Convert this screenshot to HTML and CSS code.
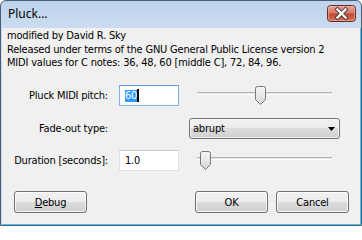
FILE: index.html
```html
<!DOCTYPE html>
<html>
<head>
<meta charset="utf-8">
<link rel="stylesheet" href="styles.css">
</head>
<body>
<div class="window">
  <div class="titlebar">
    <span class="title">Pluck...</span>
    <div class="close">
      <svg width="29" height="17" viewBox="0 0 29 17">
        <defs>
          <linearGradient id="cg" x1="0" y1="0" x2="0" y2="1">
            <stop offset="0" stop-color="#e9a99a"/>
            <stop offset="0.45" stop-color="#d47866"/>
            <stop offset="0.55" stop-color="#c24a35"/>
            <stop offset="1" stop-color="#d5735b"/>
          </linearGradient>
        </defs>
        <rect x="0.5" y="0.5" width="28" height="16" rx="3" fill="url(#cg)" stroke="#6d2a22"/>
        <rect x="1.5" y="1.5" width="26" height="14" rx="2" fill="none" stroke="#f0b8aa" stroke-opacity="0.6"/>
        <path d="M10.5 4.5 L18.5 12.5 M18.5 4.5 L10.5 12.5" stroke="#4a3432" stroke-width="4.2" stroke-linecap="square"/>
        <path d="M10.5 4.5 L18.5 12.5 M18.5 4.5 L10.5 12.5" stroke="#ffffff" stroke-width="2.4" stroke-linecap="square"/>
      </svg>
    </div>
  </div>
  <div class="client">
    <div class="info">
      <div>modified by David R. Sky</div>
      <div>Released under terms of the GNU General Public License version 2</div>
      <div>MIDI values for C notes: 36, 48, 60 [middle C], 72, 84, 96.</div>
    </div>
    <div class="grid">
      <div class="label">Pluck MIDI pitch:</div>
      <div class="input focused"><span class="sel">60</span><span class="caret"></span></div>
      <div class="slider">
        <div class="track"></div>
        <svg class="thumb" style="left: 66px" width="11" height="19" viewBox="0 0 11 19">
          <defs>
            <linearGradient id="tg" x1="0" y1="0" x2="0" y2="1">
              <stop offset="0" stop-color="#f6f6f6"/>
              <stop offset="0.5" stop-color="#e8e8e8"/>
              <stop offset="1" stop-color="#d2d2d2"/>
            </linearGradient>
          </defs>
          <path d="M0.5 2.5 Q0.5 0.5 2.5 0.5 H8.5 Q10.5 0.5 10.5 2.5 V13.5 L5.5 18.5 L0.5 13.5 Z" fill="url(#tg)" stroke="#787878"/>
        </svg>
      </div>

      <div class="label">Fade-out type:</div>
      <div></div>
      <div class="combo"><span>abrupt</span>
        <svg class="arrow" width="7" height="4" viewBox="0 0 7 4"><path d="M0 0 H7 L3.5 4 Z" fill="#000"/></svg>
      </div>

      <div class="label">Duration [seconds]:</div>
      <div class="input"><span>1.0</span></div>
      <div class="slider">
        <div class="track"></div>
        <svg class="thumb" style="left: 11px" width="11" height="19" viewBox="0 0 11 19">
          <path d="M0.5 2.5 Q0.5 0.5 2.5 0.5 H8.5 Q10.5 0.5 10.5 2.5 V13.5 L5.5 18.5 L0.5 13.5 Z" fill="url(#tg)" stroke="#787878"/>
        </svg>
      </div>
    </div>
    <div class="buttons">
      <div class="btn"><u>D</u>ebug</div>
      <div class="spacer"></div>
      <div class="btn">OK</div>
      <div class="btn">Cancel</div>
    </div>
  </div>
</div>
</body>
</html>
```
FILE: styles.css
```css
html, body {
  margin: 0;
  padding: 0;
  background: #ffffff;
}
.window {
  width: 362px;
  height: 226px;
  box-sizing: border-box;
  border: 1px solid #4c5d70;
  border-radius: 6px 6px 0 0;
  background: linear-gradient(#bcd3ec, #cadcf0 27px, #c0d5ec 100%);
  padding: 0 0 0 1px;
  display: flex;
  flex-direction: column;
}
.titlebar {
  height: 27px;
  display: flex;
  align-items: flex-start;
  justify-content: space-between;
}
.title {
  font-family: "Noto Sans", "Open Sans", sans-serif;
  font-size: 12px;
  color: #000;
  margin: 5px 0 0 6px;
  line-height: 16px;
}
.close {
  margin: 4px 5px 0 0;
  height: 17px;
}
.close svg { display: block; }
.client {
  flex: 1;
  background: #f0f0f0;
  border-right: 1px solid #4cc4ef;
  border-bottom: 1px solid #4cc4ef;
  font-family: "DejaVu Sans Condensed", "Liberation Sans", sans-serif;
  font-size: 11px;
  letter-spacing: -0.2px;
  color: #000;
  display: flex;
  flex-direction: column;
}
.info {
  padding: 1px 0 0 5px;
  line-height: 13.5px;
  height: 41px;
}
.grid {
  margin-top: 15px;
  display: grid;
  grid-template-columns: 106px 60px 150px;
  column-gap: 11px;
  grid-template-rows: 21px 22px 21px;
  row-gap: 11px;
}
.label {
  text-align: right;
  align-self: center;
  white-space: nowrap;
}
.input {
  box-sizing: border-box;
  height: 21px;
  background: #fff;
  border: 1px solid #dde3ea;
  border-top-color: #c3c7ce;
  padding: 0 0 0 5px;
  display: flex;
  align-items: center;
}
.input.focused {
  border-color: #7eb4ea;
  border-top-color: #5f9fe0;
}
.sel {
  background: #3399ff;
  color: #fff;
  line-height: 12px;
}
.caret {
  display: inline-block;
  width: 2px;
  height: 13px;
  background: #000;
}
.slider {
  position: relative;
  margin-left: -1px;
}
.track {
  position: absolute;
  left: 8px;
  right: 8px;
  top: 7px;
  height: 3px;
  box-sizing: border-box;
  border-top: 1px solid #b4b4b4;
  border-bottom: 1px solid #ffffff;
  background: #e4e4e4;
}
.thumb {
  position: absolute;
  top: 1px;
  display: block;
}
.combo {
  align-self: end;
  box-sizing: border-box;
  height: 21px;
  margin-left: -1px;
  border: 1px solid #707070;
  border-radius: 3px;
  background: linear-gradient(#f2f2f2, #ebebeb 50%, #dddddd 50%, #cfcfcf);
  box-shadow: inset 0 0 0 1px rgba(255,255,255,0.7);
  display: flex;
  align-items: center;
  justify-content: space-between;
  padding: 0 4px 0 3px;
}
.arrow { display: block; }
.buttons {
  margin-top: 20px;
  display: flex;
  padding: 0 11px 0 12px;
  column-gap: 8px;
}
.spacer { flex: 1; }
.btn {
  box-sizing: border-box;
  width: 73px;
  height: 22px;
  border: 1px solid #707070;
  border-radius: 3px;
  background: linear-gradient(#f2f2f2, #ebebeb 50%, #dddddd 50%, #cfcfcf);
  box-shadow: inset 0 0 0 1px rgba(255,255,255,0.75);
  display: flex;
  align-items: center;
  justify-content: center;
}
.btn u { text-decoration: underline; }
```
